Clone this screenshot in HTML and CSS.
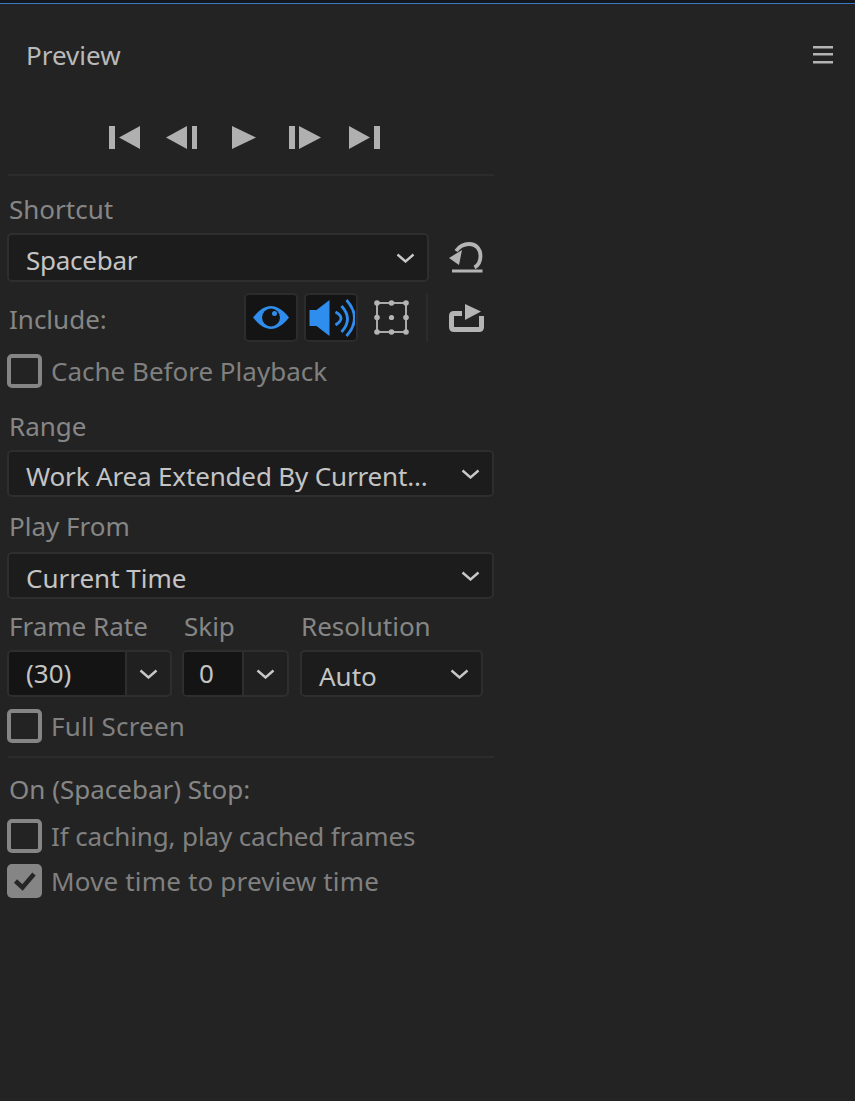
FILE: index.html
```html
<!DOCTYPE html>
<html lang="en">
<head>
<meta charset="utf-8">
<title>Preview</title>
<link rel="stylesheet" href="styles.css">
</head>
<body>
<div class="topline"></div>
<header class="head">
  <span class="title">Preview</span>
  <svg class="menu" width="20" height="18" viewBox="0 0 20 18"><path d="M0 0h20v2.4H0zM0 7h20v2.4H0zM0 15h20v2.4H0z" fill="#b4b4b4"/></svg>
</header>
<main class="panel">
  <div class="transport">
    <svg width="31" height="23" viewBox="0 0 31 23"><path d="M0 0h6v23H0zM10 11.5 31 0v23z"/></svg>
    <svg class="g26" width="31" height="23" viewBox="0 0 31 23"><path d="M0 11.5 21 0v23zM26 0h5v23h-5z"/></svg>
    <svg class="g35" width="24" height="23" viewBox="0 0 24 23"><path d="M0 0l24 11.5L0 23z"/></svg>
    <svg class="g33" width="32" height="23" viewBox="0 0 32 23"><path d="M0 0h6v23H0zM10 0l22 11.5L10 23z"/></svg>
    <svg class="g28" width="31" height="23" viewBox="0 0 31 23"><path d="M0 0l21 11.5L0 23zM25 0h6v23h-6z"/></svg>
  </div>
  <div class="rule"></div>

  <div class="label l-shortcut">Shortcut</div>
  <div class="row r-shortcut">
    <div class="select w-short"><span class="ls-n">Spacebar</span><svg class="chev" width="19" height="10" viewBox="0 0 19 10"><path d="M1.5 1.5 9.5 8.5 17.5 1.5"/></svg></div>
    <svg class="reset" width="34" height="31" viewBox="0 0 34 31"><path d="M7 9C11 3.500 16 2 20 2C27.500 2 31.500 7.500 31.500 14C31.500 19 29 23.500 25.500 25.500" fill="none" stroke="#b4b4b4" stroke-width="3.800"/><path d="M0 16 13 8 10 23z" fill="#b4b4b4"/><path d="M3 27.500H33.500V30.500H3z" fill="#b4b4b4"/></svg>
  </div>

  <div class="row r-include">
    <div class="label include">Include:</div>
    <div class="toggle">
      <svg width="36" height="23" viewBox="0 0 36 23"><path d="M0 11.500C6 4 12 0 18 0s12 4 18 11.500C30 19 24 23 18 23S6 19 0 11.500z" fill="#2e8ded"/><circle cx="18" cy="11.500" r="9" fill="#141414"/><circle cx="21.500" cy="7.500" r="2.500" fill="#2e8ded"/></svg>
    </div>
    <div class="toggle t2">
      <svg width="47" height="38" viewBox="-1.500 0 47 38"><path d="M0 11h7L20 1v36L7 27H0z" fill="#2e8ded"/><g fill="none" stroke="#2e8ded" stroke-width="2.800"><path d="M26 13Q37 19 26 26"/><path d="M32 7Q44 20 32 33"/><path d="M37 1Q53 19 37 37"/></g></svg>
    </div>
    <svg class="frame" width="35" height="35" viewBox="0 0 35 35"><path d="M3 3h29v29H3z" fill="none" stroke="#aaa" stroke-width="2"/><g fill="#b4b4b4"><circle cx="3" cy="3" r="2.800"/><circle cx="17.500" cy="3" r="2.800"/><circle cx="32" cy="3" r="2.800"/><circle cx="3" cy="17.500" r="2.800"/><circle cx="32" cy="17.500" r="2.800"/><circle cx="3" cy="32" r="2.800"/><circle cx="17.500" cy="32" r="2.800"/><circle cx="32" cy="32" r="2.800"/><circle cx="17.500" cy="17.500" r="2.600"/></g></svg>
    <div class="vsep"></div>
    <svg class="share" width="35" height="28" viewBox="0 0 35 28"><path d="M13 9.500H5Q2.500 9.500 2.500 12V23Q2.500 25.500 5 25.500H30Q32.500 25.500 32.500 23V12" fill="none" stroke="#b4b4b4" stroke-width="5"/><path d="M16 0 32 7.500 16 16z" fill="#b4b4b4"/></svg>
  </div>

  <label class="check c-cache"><span class="box"></span><span>Cache Before Playback</span></label>

  <div class="label l-range">Range</div>
  <div class="select w-full"><span class="ls-n2">Work Area Extended By Current...</span><svg class="chev" width="19" height="10" viewBox="0 0 19 10"><path d="M1.5 1.5 9.500 8.500 17.500 1.500"/></svg></div>

  <div class="label l-play">Play From</div>
  <div class="select w-full"><span>Current Time</span><svg class="chev" width="19" height="10" viewBox="0 0 19 10"><path d="M1.500 1.500 9.500 8.500 17.500 1.500"/></svg></div>

  <div class="triple">
    <div class="col c1">
      <div class="label">Frame Rate</div>
      <div class="combo">
        <span class="val v1">(30)</span>
        <span class="arrow"><svg class="chev" width="19" height="10" viewBox="0 0 19 10"><path d="M1.500 1.500 9.500 8.500 17.500 1.500"/></svg></span>
      </div>
    </div>
    <div class="col c2">
      <div class="label">Skip</div>
      <div class="combo">
        <span class="val v2">0</span>
        <span class="arrow"><svg class="chev" width="19" height="10" viewBox="0 0 19 10"><path d="M1.500 1.500 9.500 8.500 17.500 1.500"/></svg></span>
      </div>
    </div>
    <div class="col c3">
      <div class="label">Resolution</div>
      <div class="select auto"><span>Auto</span><svg class="chev" width="19" height="10" viewBox="0 0 19 10"><path d="M1.500 1.500 9.500 8.500 17.500 1.500"/></svg></div>
    </div>
  </div>

  <label class="check c-full"><span class="box"></span><span class="ls-p">Full Screen</span></label>
  <div class="rule r2"></div>
  <div class="label l-on">On (Spacebar) Stop:</div>
  <label class="check c-if"><span class="box"></span><span class="ls-n3">If caching, play cached frames</span></label>
  <label class="check c-move"><span class="box on"><svg width="24" height="20" viewBox="0 0 24 20"><path d="M2.500 10 9.500 16.500 21 3" fill="none" stroke="#262626" stroke-width="4.500"/></svg></span><span class="ls-p">Move time to preview time</span></label>
</main>
</body>
</html>
```
FILE: styles.css
```css
* { box-sizing: border-box; }
html, body { margin: 0; padding: 0; }
body {
  width: 855px;
  height: 1101px;
  overflow: hidden;
  background: #232323;
  color: #868686;
  font-family: "Noto Sans", "Open Sans", sans-serif;
  font-size: 26px;
  line-height: 34px;
}
.topline { height: 4px; background: #14181e; border-bottom: 1px solid #3b78c0; }
.head { display: flex; justify-content: space-between; align-items: center; height: 34px; margin-top: 34px; padding: 0 22px 0 26px; }
.title { color: #b9b9b9; }
.menu { display: block; }
.panel { width: 486px; margin-left: 8px; }
.transport { display: flex; margin-top: 54px; padding-left: 101px; height: 23px; }
.transport svg { display: block; fill: #b0b0b0; flex: none; }
.g26 { margin-left: 26px; }
.g35 { margin-left: 35px; }
.g33 { margin-left: 33px; }
.g28 { margin-left: 28px; }
.rule { height: 2px; background: #2c2c2c; margin-top: 25px; }
.label { color: #868686; white-space: nowrap; height: 34px; padding-left: 1px; }
.l-shortcut { margin-top: 16px; }
.row { display: flex; align-items: center; }
.r-shortcut { margin-top: 7px; margin-left: -1px; }
.select {
  display: flex; align-items: center; justify-content: space-between;
  height: 47px;
  background: #1c1c1c;
  border: 2px solid #2e2e2e;
  border-radius: 5px;
  color: #c4c4c4;
  padding: 0 12px 0 17px;
}
.select span { white-space: nowrap; padding-top: 4px; }
.ls-n { letter-spacing: -0.25px; }
.ls-n2 { letter-spacing: -0.16px; }
.ls-n3 { letter-spacing: -0.13px; }
.ls-p { letter-spacing: 0.17px; }
.chev { display: block; fill: none; stroke: #c8c8c8; stroke-width: 2.400; flex: none; }
.w-short { width: 422px; height: 49px; }
.w-full { width: 487px; margin-left: -1px; }
.reset { margin-left: 20px; display: block; }
.r-include { margin-top: 11px; height: 49px; }
.include { width: 236px; flex: none; margin-top: 2px; }
.toggle {
  display: flex; align-items: center; justify-content: center;
  width: 54px; height: 49px; background: #141414;
  border: 2px solid #2c2c2c; border-radius: 5px; flex: none;
}
.t2 { margin-left: 6px; }
.frame { margin-left: 16px; flex: none; }
.vsep { width: 2px; height: 49px; background: #2b2b2b; margin-left: 17px; flex: none; }
.share { margin-left: 21px; flex: none; }
.check { display: flex; align-items: center; height: 34px; margin-left: -1px; color: #808080; white-space: nowrap; }
.box {
  display: flex; align-items: center; justify-content: center;
  width: 35px; height: 34px; border: 4px solid #858585; border-radius: 5px; margin-right: 9px; flex: none;
}
.box.on { background: #858585; border: 0; }
.c-cache { margin-top: 12px; }
.l-range { margin-top: 21px; }
.l-range + .select { margin-top: 7px; }
.l-play { margin-top: 12px; }
.l-play + .select { margin-top: 9px; }
.triple { display: flex; margin-top: 10px; }
.col { flex: none; }
.c1 { width: 175px; }
.c2 { width: 117px; }
.c3 { width: 184px; }
.col .select, .combo { margin-top: 7px; }
.combo {
  display: flex; height: 47px; margin-left: -1px;
  background: #202020; border: 2px solid #2e2e2e; border-radius: 5px;
  color: #c4c4c4;
  overflow: hidden;
}
.val { background: #141414; display: block; line-height: 43px; height: 100%; flex: none; }
.v1 { width: 116px; padding-left: 17px; }
.v2 { width: 58px; padding-left: 15px; }
.arrow { display: flex; align-items: center; justify-content: center; border-left: 2px solid #2e2e2e; flex: 1; }
.c1 .combo { width: 165px; }
.c2 .combo { width: 107px; }
.auto { width: 183px; padding-left: 17px; padding-right: 12px; }
.c-full { margin-top: 12px; }
.r2 { margin-top: 13px; }
.l-on { margin-top: 14px; }
.c-if { margin-top: 13px; }
.c-move { margin-top: 11px; }
```
